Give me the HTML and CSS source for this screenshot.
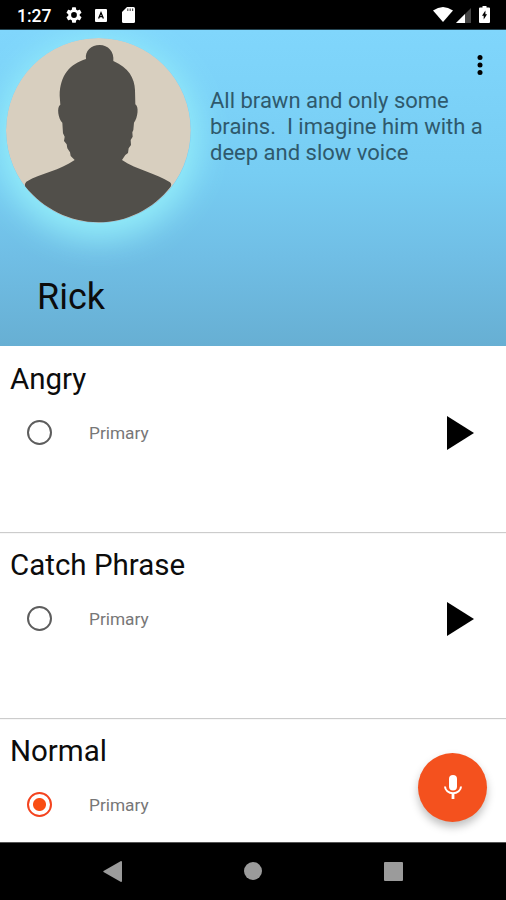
FILE: index.html
```html
<!DOCTYPE html>
<html lang="en">
<head>
<meta charset="utf-8">
<title>Rick</title>
<link rel="stylesheet" href="styles.css">
</head>
<body>
<div class="screen">
  <div class="status">
    <span class="clock">1:27</span>
    <svg class="gear" viewBox="2 2 20 20"><path fill="#fff" d="M19.14 12.94c.04-.3.06-.61.06-.94s-.02-.64-.07-.94l2.03-1.58a.49.49 0 0 0 .12-.61l-1.92-3.32a.49.49 0 0 0-.59-.22l-2.39.96a7 7 0 0 0-1.62-.94L14.4 2.81a.48.48 0 0 0-.48-.41h-3.84a.48.48 0 0 0-.47.41l-.36 2.54c-.59.24-1.13.57-1.62.94l-2.39-.96a.49.49 0 0 0-.59.22L2.74 8.87a.48.48 0 0 0 .12.61l2.03 1.58a6 6 0 0 0 0 1.88l-2.03 1.58a.49.49 0 0 0-.12.61l1.92 3.32c.12.22.37.29.59.22l2.39-.96c.5.38 1.03.7 1.62.94l.36 2.54c.05.24.24.41.48.41h3.84c.24 0 .44-.17.47-.41l.36-2.54c.59-.24 1.13-.56 1.62-.94l2.39.96c.22.08.47 0 .59-.22l1.92-3.32a.49.49 0 0 0-.12-.61zM12 15.6A3.6 3.6 0 1 1 12 8.4a3.6 3.6 0 0 1 0 7.2z"/></svg>
    <svg class="abox" viewBox="0 0 12 13"><rect width="12" height="13" rx="1" fill="#fff"/><path d="M3.6 9.5 6 3.8l2.4 5.7M4.6 7.6h2.8" fill="none" stroke="#000" stroke-width="1.3"/></svg>
    <svg class="sd" viewBox="0 0 13 16"><path fill="#fff" d="M5 0h6.500Q13 0 13 1.500v13q0 1.500-1.500 1.500h-10Q0 16 0 14.500V5z"/><path stroke="#555" stroke-width="1.200" d="M5.800 1.500v2.500M8.200 1.500v2.500M10.600 1.500v2.500"/></svg>
    <span class="spacer"></span>
    <svg class="wifi" viewBox="0 0 20 15"><path fill="#fff" d="M0 3.500Q10-3.500 20 3.500L10 15z"/></svg>
    <svg class="cell" viewBox="0 0 15 15"><path fill="#444" d="M15 0v15H0z"/><path fill="#fff" d="M9 6v9H0z"/></svg>
    <svg class="battery" viewBox="0 0 11 17"><path fill="#fff" d="M3.500 0h4v1.500H10q1 0 1 1V16q0 1-1 1H1q-1 0-1-1V2.500q0-1 1-1h2.500z"/><path fill="#000" d="M6.400 4.500v3.700h1.700L4.700 13.500v-3.700H3z"/></svg>
  </div>

  <header class="profile">
    <div class="top">
      <svg class="avatar" viewBox="18 39 555 555">
        <circle cx="295" cy="316" r="277" fill="#d8cfbf"/>
        <path fill="#514f4a" d="M258 102C254 78 274 60 299 60S343 80 340 108C386 128 404 160 405 195L406 238C417 244 414 278 402 293L400 315 397 322 398 335 392 345 393 360 386 370 384 384 376 390 366 405C410 435 470 445 510 472Q516 477 512 485C460 552 380 592 295 592S130 552 75 484Q73 476 79 470C125 443 180 437 224 405L212 393 210 382 202 370 200 358 192 348 194 335 189 325 187 293C175 282 169 246 181 239L179 212C180 150 210 117 258 102Z"/>
      </svg>
      <p class="bio">All brawn and only some<br>brains.&nbsp; I imagine him with a<br>deep and slow voice</p>
      <svg class="more" viewBox="0 0 6 20"><circle cx="3" cy="2.500" r="2.500"/><circle cx="3" cy="10" r="2.500"/><circle cx="3" cy="17.500" r="2.500"/></svg>
    </div>
    <h1 class="name">Rick</h1>
  </header>

  <main class="list">
    <section class="card">
      <h2 class="title">Angry</h2>
      <div class="row">
        <span class="radio"></span><span class="label">Primary</span>
        <svg class="play" viewBox="0 0 27 34"><path d="M0 0 27 17 0 34z"/></svg>
      </div>
    </section>
    <section class="card">
      <h2 class="title">Catch Phrase</h2>
      <div class="row">
        <span class="radio"></span><span class="label">Primary</span>
        <svg class="play" viewBox="0 0 27 34"><path d="M0 0 27 17 0 34z"/></svg>
      </div>
    </section>
    <section class="card">
      <h2 class="title">Normal</h2>
      <div class="row">
        <span class="radio checked"></span><span class="label">Primary</span>
      </div>
    </section>
    <div class="fab">
      <svg class="mic" viewBox="0 0 18 24"><rect x="5" y="0" width="8" height="15.500" rx="4" fill="#fff"/><path d="M1 11.500a8 6.700 0 0 0 16 0" fill="none" stroke="#fff" stroke-width="2"/><path d="M9 18v6" stroke="#fff" stroke-width="2.800"/></svg>
    </div>
  </main>

  <nav class="nav">
    <svg class="back" viewBox="0 0 19 21"><path fill="#9b9b9b" d="M18 0q1 0 1 1v19q0 1-1 1L.500 11q-.5-.5 0-1z"/></svg>
    <span class="home"></span>
    <span class="recent"></span>
  </nav>
</div>
</body>
</html>
```

FILE: styles.css
```css
* { box-sizing: border-box; }
body { margin: 0; font-family: Roboto, "Liberation Sans", sans-serif; color: #0c0c0c; }
svg { display: block; flex: none; }
h1, h2, p { margin: 0; font-weight: 400; }
.screen { width: 506px; height: 900px; display: flex; flex-direction: column; overflow: hidden; background: #000; }

.status { height: 30px; flex: none; display: flex; align-items: center; padding: 1px 16px 0 17px; border-bottom: 1px solid #244452; }
.clock { width: 49px; color: #fff; font-size: 17.500px; font-weight: 500; line-height: 28px; padding-top: 1px; }
.gear { width: 16px; height: 16px; }
.abox { width: 12px; height: 13px; margin-left: 13px; }
.sd { width: 13px; height: 16px; margin-left: 15px; }
.spacer { flex: 1; }
.wifi { width: 20px; height: 15px; margin-top: -2px; }
.cell { width: 15px; height: 15px; margin-left: 3px; }
.battery { width: 11px; height: 17px; margin: -1px 0 0 8px; }

.profile { height: 316px; flex: none; overflow: hidden; background: linear-gradient(#80d6fc, #77cdf3 45%, #70bee5 72%, #67afd3); }
.top { display: flex; align-items: flex-start; padding: 8px 23px 0 6px; height: 237px; }
.avatar { width: 185px; height: 185px; border-radius: 50%; box-shadow: 0 8px 32px 8px #93edf9; }
.bio { flex: 1; min-width: 0; margin: 50px 0 0 19px; font-size: 22px; line-height: 26px; color: #2f596c; white-space: nowrap; }
.more { width: 6px; height: 20px; margin-top: 17px; }
.name { padding-left: 37px; font-size: 36px; line-height: 60px; }

.list { flex: 1; min-height: 0; position: relative; background: #fff; overflow: hidden; }
.card { height: 186px; padding: 14px 32px 0 10px; box-shadow: 0 1px 1px #ccc; }
.title { font-size: 29.500px; line-height: 38px; }
.row { display: flex; align-items: center; height: 70px; padding-left: 17px; }
.radio { width: 25px; height: 25px; margin-top: -1px; border: 2px solid #5d5d5d; border-radius: 50%; flex: none; }
.radio.checked { border-color: #f4431e; background: radial-gradient(circle, #f94e14 6px, transparent 7px); }
.label { flex: 1; margin-left: 37px; font-size: 17.300px; color: #777; }
.play { width: 27px; height: 34px; }
.fab { position: absolute; right: 19px; bottom: 20px; width: 69px; height: 69px; border-radius: 50%; background: #f4511e; display: flex; align-items: center; justify-content: center; box-shadow: 0 5px 9px rgba(0,0,0,.25); }
.mic { width: 18px; height: 24px; margin-top: -1px; }

.nav { height: 58px; flex: none; display: flex; align-items: center; padding-left: 103px; background: #000; border-top: 1px solid #555; }
.back { width: 19px; height: 21px; margin-top: -1px; }
.home { width: 18px; height: 18px; border-radius: 50%; background: #9b9b9b; margin: -2px 0 0 122px; }
.recent { width: 19px; height: 19px; border-radius: 1px; background: #9b9b9b; margin: -1px 0 0 122px; }
```
